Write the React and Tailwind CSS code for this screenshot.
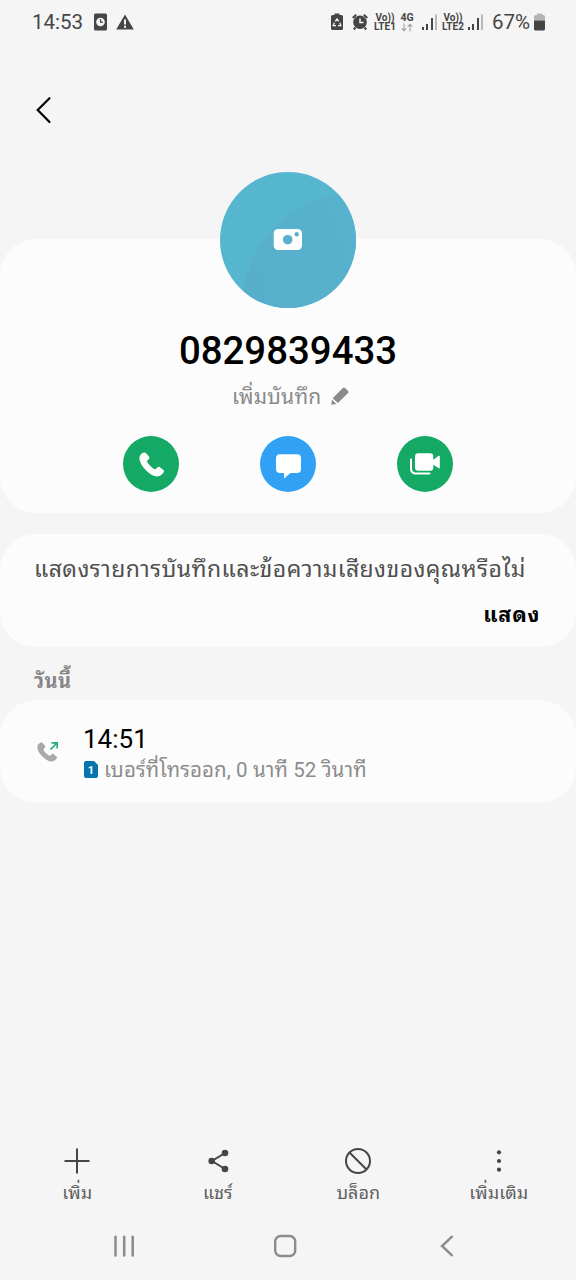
import React from "react";

function NetworkLabel({ sim }) {
  return (
    <div className="flex w-[22px] flex-col items-center whitespace-nowrap text-[10px] font-bold leading-[9px]">
      <span className="h-[9px]">Vo))</span>
      <span className="h-[9px]">{sim}</span>
    </div>
  );
}

function StatusBar() {
  return (
    <header className="flex h-[44px] shrink-0 items-center justify-between pl-[32px] pr-[31px] text-[#454545]">
      <div className="flex items-center">
        <span className="w-[51px] whitespace-nowrap text-[20.5px] leading-[42px]">14:53</span>
        <svg className="ml-[11px] h-[18px] w-[13px]" viewBox="0 0 13 18" fill="none">
          <rect x="0" y="0.5" width="13" height="17" rx="1.5" fill="#454545" />
          <circle cx="6.5" cy="9" r="4.3" fill="#f5f5f5" />
          <path d="M6.5 6v3.2H9" stroke="#454545" strokeWidth="1.2" />
        </svg>
        <svg className="ml-[9px] h-[16px] w-[18px]" viewBox="0 0 18 16">
          <path d="M9 0.4L17.8 15.6H0.2z" fill="#454545" />
          <path d="M8 5.5h2v5H8zM8 11.7h2v2H8z" fill="#f5f5f5" />
        </svg>
      </div>
      <div className="flex items-center">
        <svg className="h-[18px] w-[12px]" viewBox="0 0 12 18" fill="none">
          <path d="M3.5 0.6h5v1.5h2a1.5 1.5 0 0 1 1.500 1.500v12a1.500 1.500 0 0 1-1.500 1.500h-9A1.500 1.500 0 0 1 0 15.600v-12a1.500 1.500 0 0 1 1.500-1.500h2z" fill="#454545" />
          <path d="M4.300 8.300L6 5.900l1.700 2.400M8.800 9.800l1 2.800H7M5 12.600H2.200l1.200-2.800" stroke="#f5f5f5" strokeWidth="1.300" />
        </svg>
        <svg className="ml-[9px] h-[18px] w-[16px]" viewBox="0 0 16 18" fill="none">
          <circle cx="8" cy="9.300" r="6.800" fill="#454545" />
          <path d="M0.700 4.900L4.200 1.700M15.300 4.900L11.800 1.700M3.500 14.500l-1.700 2M12.500 14.500l1.700 2" stroke="#454545" strokeWidth="2" />
          <path d="M8 5.500v4h3.500" stroke="#f5f5f5" strokeWidth="1.500" />
        </svg>
        <div className="ml-[6px]">
          <NetworkLabel sim="LTE1" />
        </div>
        <div className="ml-[4px] flex w-[14px] flex-col items-center">
          <span className="text-[10.5px] font-bold leading-[11px]">4G</span>
          <svg className="h-[9px] w-[12px]" viewBox="0 0 12 9" fill="none" stroke="#a0a0a0" strokeWidth="1.1">
            <path d="M3 0.500v7M0.700 5.300L3 7.800l2.300-2.500M9 8.500v-7M6.700 3.700L9 1.200l2.300 2.500" />
          </svg>
        </div>
        <Signal className="ml-[8px] h-[16px] w-[16px]" />
        <div className="ml-[4px]">
          <NetworkLabel sim="LTE2" />
        </div>
        <Signal className="ml-[4px] h-[16px] w-[16px]" />
        <span className="ml-[8px] w-[39px] whitespace-nowrap text-[20.5px] leading-[42px]">67%</span>
        <svg className="ml-[3px] h-[18px] w-[11px]" viewBox="0 0 11 18">
          <path d="M3 0.500h5V2h1.500A1.500 1.500 0 0 1 11 3.500v4H0v-4A1.500 1.500 0 0 1 1.500 2H3z" fill="#b5b5b5" />
          <path d="M0 7.500h11V16a1.500 1.500 0 0 1-1.500 1.500h-8A1.500 1.500 0 0 1 0 16z" fill="#454545" />
        </svg>
      </div>
    </header>
  );
}

function Signal({ className }) {
  return (
    <svg className={className} viewBox="0 0 16 16">
      <path d="M0 13h2v3h-2zM4 10h2v6h-2zM9 4h2V16h-2z" fill="#454545" />
      <path d="M13 0.500h2V16h-2z" fill="#b8b8b8" />
    </svg>
  );
}

function Handset({ className }) {
  return (
    <svg className={className} viewBox="0 0 25 25">
      <path
        d="M4.300 0.800C2.300 1.700 0.400 3.500 0.400 6.100c0 4.300 3.500 9.300 6.700 12.300 3.300 3.200 7.200 6 11.100 6 2.900 0 5.100-1.900 6.500-4.100.5-.8.400-1.600-.3-2.200l-3.600-2.900c-.8-.6-1.700-.5-2.400.2l-1.300 1.400c-.6.600-1.400.6-2.100.2-2-1.200-5.400-4.600-6.600-6.700-.4-.7-.3-1.400.2-2L10 6.900c.6-.7.600-1.600 0-2.300L7 1.200C6.300.4 5.200.4 4.300.8z"
        fill="currentColor"
      />
    </svg>
  );
}

function Avatar() {
  return (
    <button className="relative z-10 mx-auto -mt-[67px] block h-[136px] w-[136px]">
      <svg className="h-[136px] w-[136px]" viewBox="0 0 136 136">
        <defs>
          <clipPath id="avatar">
            <circle cx="68" cy="68" r="68" />
          </clipPath>
          <linearGradient id="shade" x1="0" x2="1" y1="0.600" y2="0.300">
            <stop offset="0" stopColor="#57aecb" />
            <stop offset="1" stopColor="#57b2cd" />
          </linearGradient>
        </defs>
        <g clipPath="url(#avatar)">
          <rect width="136" height="136" fill="#57b6cf" />
          <path d="M20 136C24 80 60 34 116 22L136 20V136z" fill="url(#shade)" />
        </g>
        <rect x="53.700" y="57" width="28.300" height="21" rx="4.500" fill="#fff" />
        <circle cx="67.700" cy="67.700" r="4.800" fill="#57b0cc" />
        <circle cx="76.700" cy="62.300" r="2.200" fill="#57b0cc" />
      </svg>
    </button>
  );
}

function ProfileCard() {
  return (
    <section className="h-[274px] shrink-0 rounded-[36px] bg-[#fcfcfc]">
      <Avatar />
      <h1 className="mt-[21px] text-center text-[38.4px] font-medium leading-[44px] text-black">0829839433</h1>
      <div className="mt-[9px] flex h-[28px] items-center pl-[232px] text-[#8a8a8a]">
        <span className="w-[88px] whitespace-nowrap pt-[2px] text-[21px] leading-[28px] tracking-[0.2px]">เพิ่มบันทึก</span>
        <svg className="-mt-[1px] ml-[11px] h-[18px] w-[18px]" viewBox="0 0 18 18" fill="currentColor">
          <path d="M0.300 17.700L1 12.800l4.300 4.200zM1.700 11.300L11.800 0.900q1.200-.9 2.200 0l3.100 3.100q.9 1 0 2L6.900 16z" />
        </svg>
      </div>
      <div className="mt-[26px] flex justify-between pl-[123px] pr-[123px]">
        <button className="flex h-[56px] w-[56px] items-center justify-center rounded-full bg-[#15a966] text-white">
          <Handset className="h-[25px] w-[25px]" />
        </button>
        <button className="flex h-[56px] w-[56px] items-center justify-center rounded-full bg-[#30a1f5]">
          <svg className="mt-[5px] h-[25px] w-[25px]" viewBox="0 0 25 25" fill="#fff">
            <path d="M4 0.300h17a4 4 0 0 1 4 4V15a4 4 0 0 1-4 4h-6.500L8 24.600V19H4a4 4 0 0 1-4-4V4.300a4 4 0 0 1 4-4z" />
          </svg>
        </button>
        <button className="flex h-[56px] w-[56px] items-center justify-center rounded-full bg-[#15a966]">
          <svg className="h-[22px] w-[30px]" viewBox="0 0 30 22" fill="#fff">
            <rect x="5" y="0.300" width="18.300" height="17.500" rx="3.200" />
            <path d="M23 7l5.800-4.200q1-.5 1 .6v11.300q0 1-1 .6L23 11.500z" />
            <path d="M1 6.500v9.500a4.500 4.500 0 0 0 4.500 4.500h14" fill="none" stroke="#fff" strokeWidth="2" strokeLinecap="round" />
          </svg>
        </button>
      </div>
    </section>
  );
}

function PromptCard() {
  return (
    <section className="mt-[21px] h-[113px] shrink-0 rounded-[36px] bg-[#fcfcfc] pt-[20px]">
      <p className="whitespace-nowrap pl-[34px] text-[23px] leading-[32px] tracking-[0.420px] text-[#505050]">
        แสดงรายการบันทึกและข้อความเสียงของคุณหรือไม่
      </p>
      <div className="mt-[13px] flex justify-end pr-[36px]">
        <button className="whitespace-nowrap text-[21.5px] font-bold leading-[32px] tracking-[0.7px] text-black">แสดง</button>
      </div>
    </section>
  );
}

function CallLog() {
  return (
    <>
      <h2 className="h-[53px] shrink-0 whitespace-nowrap pl-[34px] pt-[18px] text-[20px] font-bold leading-[32px] tracking-[0.5px] text-[#858585]">วันนี้</h2>
      <section className="flex h-[103px] shrink-0 rounded-[36px] bg-[#fcfcfc]">
        <div className="flex w-[83px] items-center pl-[37px]">
          <div className="flex h-[20px] w-[21px] items-end">
            <Handset className="h-[20px] w-[20px] shrink-0 text-[#a9a9a9]" />
            <svg className="-ml-[7px] h-[8px] w-[8px] shrink-0 self-start" viewBox="0 0 8 8" fill="none" stroke="#1fae74" strokeWidth="1.600">
              <path d="M0.500 7.500L7 1M1.500 0.900h5.700V6.500" />
            </svg>
          </div>
        </div>
        <div className="pt-[22px]">
          <div className="text-[26px] leading-[34px] text-black">14:51</div>
          <div className="flex h-[28px] items-center pl-[1px]">
            <svg className="-mt-[2px] h-[17px] w-[14px]" viewBox="0 0 14 17">
              <path d="M2 0h8l4 4v11a2 2 0 0 1-2 2H2a2 2 0 0 1-2-2V2a2 2 0 0 1 2-2z" fill="#0874ad" />
              <text x="7" y="12.500" textAnchor="middle" fontSize="11" fontWeight="700" fontFamily="Roboto, sans-serif" fill="#fff">1</text>
            </svg>
            <span className="ml-[6px] whitespace-nowrap text-[20.500px] leading-[28px] tracking-[0.1px] text-[#8c8c8c]">
              เบอร์ที่โทรออก, 0 นาที 52 วินาที
            </span>
          </div>
        </div>
      </section>
    </>
  );
}

function Action({ label, children }) {
  return (
    <button className="flex w-[140.500px] flex-col items-center text-[#454545]">
      <svg className="h-[28px] w-[28px]" viewBox="0 0 28 28" fill="none" stroke="currentColor" strokeWidth="2">
        {children}
      </svg>
      <span className="mt-[4px] whitespace-nowrap text-[18px] leading-[28px] text-[#606060]">{label}</span>
    </button>
  );
}

function BottomBar() {
  return (
    <nav className="mt-auto shrink-0">
      <div className="flex h-[65px] pl-[7px]">
        <Action label="เพิ่ม">
          <path d="M14 1.500v25M1.500 14h25" />
        </Action>
        <Action label="แชร์">
          <path d="M21 6L8 14l13 8" />
          <g fill="currentColor" stroke="none">
            <circle cx="21" cy="6" r="3.300" />
            <circle cx="7.700" cy="14" r="3.300" />
            <circle cx="21" cy="22" r="3.300" />
          </g>
        </Action>
        <Action label="บล็อก">
          <circle cx="14" cy="14" r="12" />
          <path d="M5.500 5.500l17 17" />
        </Action>
        <Action label="เพิ่มเติม">
          <g fill="currentColor" stroke="none">
            <circle cx="14" cy="5.300" r="2.100" />
            <circle cx="14" cy="14" r="2.100" />
            <circle cx="14" cy="22.700" r="2.100" />
          </g>
        </Action>
      </div>
      <div className="flex h-[68px] items-center pl-[112px]">
        <svg className="h-[24px] w-[24px]" viewBox="0 0 24 24" stroke="#8c8c8c" strokeWidth="2.500" strokeLinecap="round">
          <path d="M3.500 2.700v18.800M12.200 2.700v18.800M20.700 2.700v18.800" />
        </svg>
        <svg className="ml-[137px] h-[24px] w-[24px]" viewBox="0 0 24 24" fill="none" stroke="#8c8c8c" strokeWidth="2.400">
          <rect x="2.200" y="2" width="20" height="20" rx="5.500" />
        </svg>
        <svg className="ml-[137px] h-[24px] w-[24px]" viewBox="0 0 24 24" fill="none" stroke="#8c8c8c" strokeWidth="2.400" strokeLinecap="round">
          <path d="M18 2.700L8 12l10 9.300" />
        </svg>
      </div>
    </nav>
  );
}

export default function App() {
  return (
    <main className="flex h-[1280px] w-[576px] flex-col overflow-hidden bg-[#f5f5f5] font-['Roboto','Noto_Sans_Thai_Looped','Noto_Looped_Thai','Loma','Waree','Noto_Sans_Thai','Noto_Sans',sans-serif]">
      <StatusBar />
      <div className="h-[195px] shrink-0 pl-[34px] pt-[52px]">
        <svg className="h-[28px] w-[20px]" viewBox="0 0 20 28" fill="none" stroke="#000" strokeWidth="2.200" strokeLinecap="round">
          <path d="M15.500 2.200L3.700 14l11.800 12" />
        </svg>
      </div>
      <ProfileCard />
      <PromptCard />
      <CallLog />
      <BottomBar />
    </main>
  );
}
